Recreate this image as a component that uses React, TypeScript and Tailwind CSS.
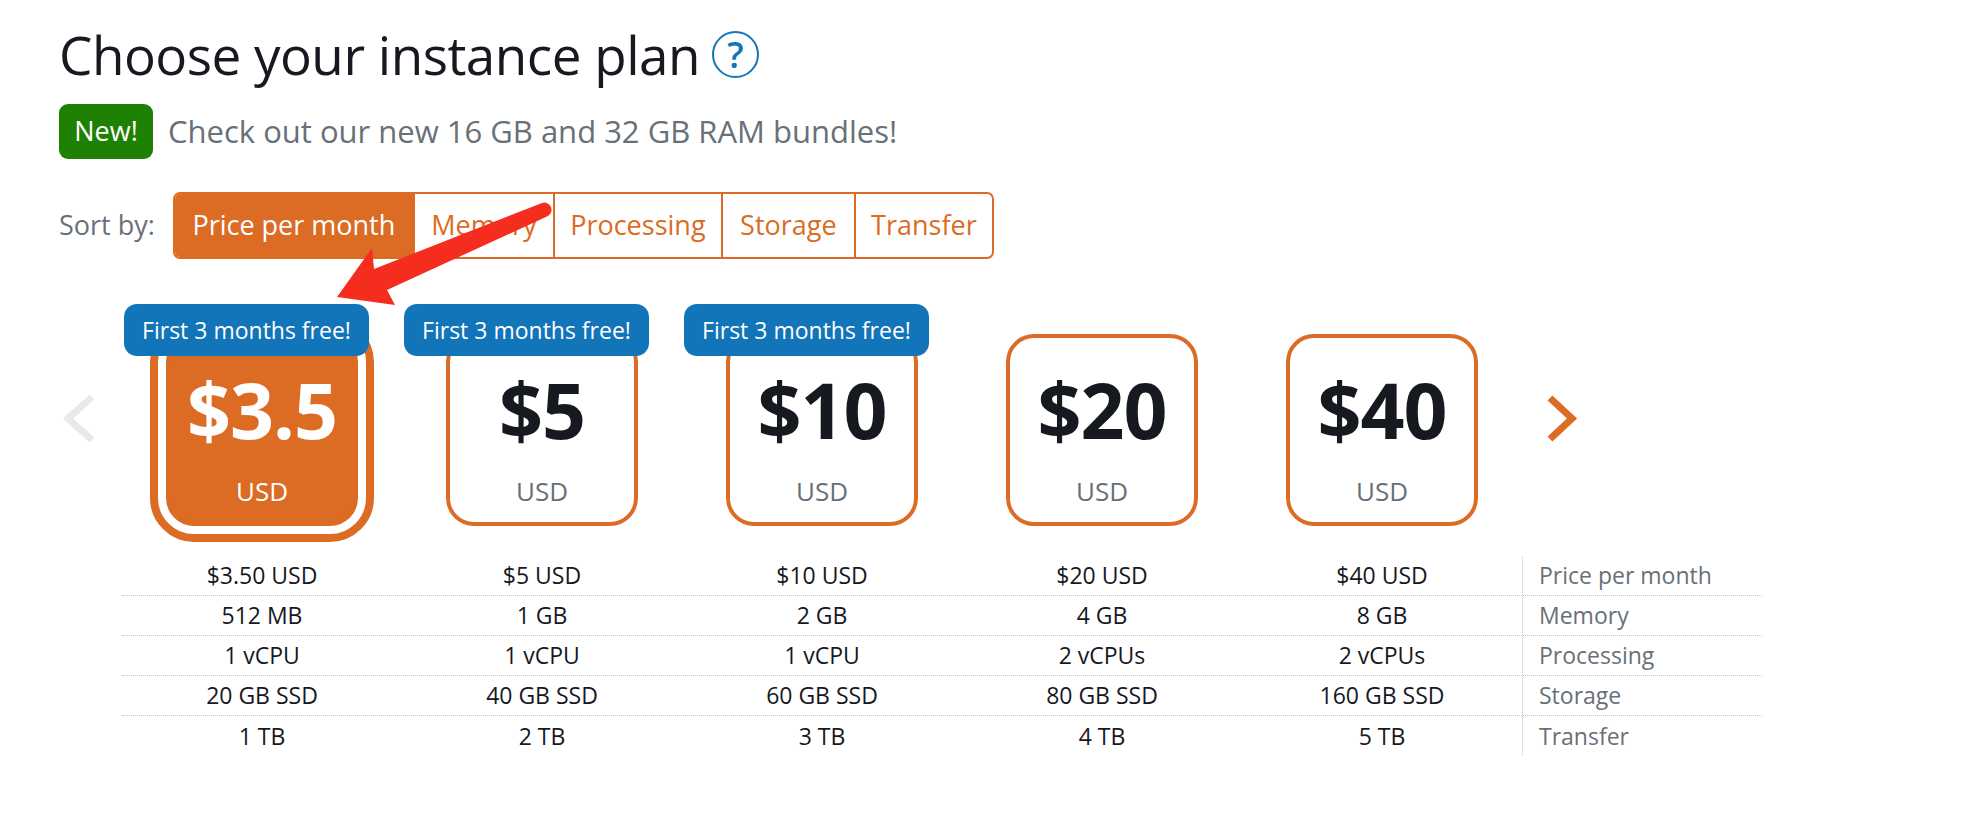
import React from 'react';

const plans = [
  { price: '$3.5', promo: true, selected: true },
  { price: '$5', promo: true, selected: false },
  { price: '$10', promo: true, selected: false },
  { price: '$20', promo: false, selected: false },
  { price: '$40', promo: false, selected: false },
];

const specs = [
  { label: 'Price per month', values: ['$3.50 USD', '$5 USD', '$10 USD', '$20 USD', '$40 USD'] },
  { label: 'Memory', values: ['512 MB', '1 GB', '2 GB', '4 GB', '8 GB'] },
  { label: 'Processing', values: ['1 vCPU', '1 vCPU', '1 vCPU', '2 vCPUs', '2 vCPUs'] },
  { label: 'Storage', values: ['20 GB SSD', '40 GB SSD', '60 GB SSD', '80 GB SSD', '160 GB SSD'] },
  { label: 'Transfer', values: ['1 TB', '2 TB', '3 TB', '4 TB', '5 TB'] },
];

const sortTabs = [
  { name: 'Price per month', w: 'w-[238px]' },
  { name: 'Memory', w: 'w-[140px]' },
  { name: 'Processing', w: 'w-[168px]' },
  { name: 'Storage', w: 'w-[133px]' },
  { name: 'Transfer', w: 'w-[138px]' },
];

const PriceCard = ({ price, selected }: { price: string; selected: boolean }) => (
  <div
    className={
      selected
        ? 'w-[192px] h-[192px] rounded-[28px] border-4 border-[#dc6b24] bg-[#dc6b24] flex flex-col items-center'
        : 'w-[192px] h-[192px] rounded-[28px] border-4 border-[#dc6b24] bg-white flex flex-col items-center'
    }
  >
    <span
      className={
        selected
          ? 'mt-[33px] text-[77px] leading-none font-bold text-white tracking-[-1px]'
          : 'mt-[33px] text-[77px] leading-none font-bold text-[#16191f] tracking-[-1px]'
      }
    >
      {price}
    </span>
    <span
      className={
        selected
          ? 'mt-[30px] text-[26px] leading-none text-white'
          : 'mt-[30px] text-[26px] leading-none text-[#687078]'
      }
    >
      USD
    </span>
  </div>
);

const App = () => {
  return (
    <div className="relative w-[1976px] h-[822px] overflow-hidden bg-white font-['Open_Sans',sans-serif]">
      {/* Header */}
      <div className="pl-[59px] pt-[28px]">
        <h1 className="flex items-center gap-[12px] text-[53px] leading-none font-normal tracking-[-0.5px] text-[#16191f]">
          Choose your instance plan
          <span className="w-[47px] h-[47px] rounded-full border-2 border-[#1274b9] flex items-center justify-center text-[36px] font-semibold text-[#1274b9] tracking-normal">
            ?
          </span>
        </h1>

        <div className="mt-[23px] flex items-center gap-[15px]">
          <span className="w-[94px] h-[55px] rounded-[9px] bg-[#1e8103] text-white text-[27px] flex items-center justify-center">
            New!
          </span>
          <span className="text-[31px] text-[#687078]">Check out our new 16 GB and 32 GB RAM bundles!</span>
        </div>

        {/* Sort */}
        <div className="mt-[33px] flex items-center gap-[18px]">
          <span className="text-[27px] text-[#687078]">Sort by:</span>
          <div className="flex h-[67px] rounded-[7px] border-2 border-[#dc6b24] overflow-hidden">
            {sortTabs.map((tab, i) => (
              <div
                key={tab.name}
                className={
                  i === 0
                    ? `${tab.w} flex items-center justify-center bg-[#dc6b24] text-white text-[27px]`
                    : `${tab.w} flex items-center justify-center border-l-2 border-[#dc6b24] text-[#dc6b24] text-[27px]`
                }
              >
                {tab.name}
              </div>
            ))}
          </div>
        </div>
      </div>

      {/* Plans */}
      <div className="mt-[45px] flex h-[252px]">
        <div className="w-[122px] shrink-0">
          <svg className="ml-[60px] mt-[86px]" width="40" height="60" viewBox="0 0 40 60">
            <polyline points="32,7 8,28.5 32,50" fill="none" stroke="#e8eaea" strokeWidth="7" />
          </svg>
        </div>
        {plans.map((plan) => (
          <div
            key={plan.price}
            className={
              plan.selected
                ? 'relative w-[280px] shrink-0 flex flex-col items-center pt-[14px]'
                : 'relative w-[280px] shrink-0 flex flex-col items-center pt-[30px]'
            }
          >
            {plan.promo && (
              <div className="absolute z-10 top-0 left-[2px] w-[245px] h-[52px] rounded-[13px] bg-[#1274b9] text-white text-[23px] flex items-center justify-center">
                First 3 months free!
              </div>
            )}
            {plan.selected ? (
              <div className="rounded-[44px] border-8 border-[#dc6b24] p-[8px] bg-white">
                <PriceCard price={plan.price} selected />
              </div>
            ) : (
              <PriceCard price={plan.price} selected={false} />
            )}
          </div>
        ))}
        <svg className="ml-[18px] mt-[86px]" width="40" height="60" viewBox="0 0 40 60">
          <polyline points="10,8 32,28.5 10,49" fill="none" stroke="#dc6b24" strokeWidth="7" />
        </svg>
      </div>

      {/* Specs table */}
      <div className="ml-[122px] w-[1640px]">
        {specs.map((row, r) => (
          <div
            key={row.label}
            className={
              r < specs.length - 1
                ? 'flex h-[40px] border-b border-dotted border-[#bfc5c6]'
                : 'flex h-[40px]'
            }
          >
            {row.values.map((v, i) => (
              <div key={i} className="w-[280px] flex items-center justify-center text-[23px] text-[#16191f]">
                {v}
              </div>
            ))}
            <div className="flex-1 flex items-center pl-[16px] border-l border-dotted border-[#bfc5c6] text-[23px] text-[#687078]">
              {row.label}
            </div>
          </div>
        ))}
      </div>

      {/* Annotation arrow */}
      <svg className="absolute inset-0 pointer-events-none" width="1976" height="822" viewBox="0 0 1976 822">
        <path
          d="M337 297 L372 248 L374 269 L542 203 A7.2 7.2 0 0 1 548 216 L387 290 L395 305 Z"
          fill="#f52d1f"
        />
      </svg>
    </div>
  );
};

export default App;
